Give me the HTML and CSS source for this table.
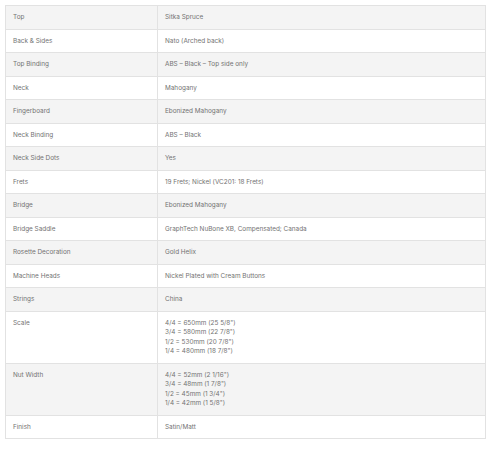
FILE: index.html
```html
<!DOCTYPE html>
<html>
<head>
<meta charset="utf-8">
<link rel="stylesheet" href="styles.css">
</head>
<body>
<table class="specs">
<tbody>
<tr><td class="k">Top</td><td>Sitka Spruce</td></tr>
<tr><td class="k">Back &amp; Sides</td><td>Nato (Arched back)</td></tr>
<tr><td class="k">Top Binding</td><td>ABS – Black – Top side only</td></tr>
<tr><td class="k">Neck</td><td>Mahogany</td></tr>
<tr><td class="k">Fingerboard</td><td>Ebonized Mahogany</td></tr>
<tr><td class="k">Neck Binding</td><td>ABS – Black</td></tr>
<tr><td class="k">Neck Side Dots</td><td>Yes</td></tr>
<tr><td class="k">Frets</td><td>19 Frets; Nickel (VC201: 18 Frets)</td></tr>
<tr><td class="k">Bridge</td><td>Ebonized Mahogany</td></tr>
<tr><td class="k">Bridge Saddle</td><td>GraphTech NuBone XB, Compensated; Canada</td></tr>
<tr><td class="k">Rosette Decoration</td><td>Gold Helix</td></tr>
<tr><td class="k">Machine Heads</td><td>Nickel Plated with Cream Buttons</td></tr>
<tr><td class="k">Strings</td><td>China</td></tr>
<tr><td class="k">Scale</td><td>4/4 = 650mm (25 5/8")<br>3/4 = 580mm (22 7/8")<br>1/2 = 530mm (20 7/8")<br>1/4 = 480mm (18 7/8")</td></tr>
<tr><td class="k">Nut Width</td><td>4/4 = 52mm (2 1/16")<br>3/4 = 48mm (1 7/8")<br>1/2 = 45mm (1 3/4")<br>1/4 = 42mm (1 5/8")</td></tr>
<tr><td class="k">Finish</td><td>Satin/Matt</td></tr>
</tbody>
</table>
</body>
</html>
```

FILE: styles.css
```css
html, body {
  margin: 0;
  padding: 0;
  background: #ffffff;
}
body {
  padding: 5px;
  font-family: Inter, "Liberation Sans", sans-serif;
  font-size: 6.4px;
  line-height: 9.5px;
  color: #737373;
}
.specs {
  width: 481px;
  border-collapse: collapse;
  table-layout: fixed;
}
.specs td {
  border: 1px solid #e2e2e2;
  padding: 7px 7px 6px;
  vertical-align: top;
  text-align: left;
}
.specs td.k {
  width: 152px;
  box-sizing: border-box;
}
.specs tr:nth-child(odd) td {
  background: #f4f4f4;
}
```
